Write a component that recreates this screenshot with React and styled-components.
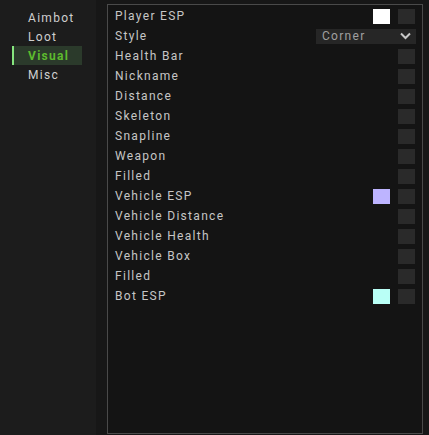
import React from 'react';
import styled, { createGlobalStyle } from 'styled-components';

const GlobalStyle = createGlobalStyle`
  html, body {
    margin: 0;
    padding: 0;
    background: #171717;
  }
  body {
    font-family: Roboto, "Noto Sans", sans-serif;
  }
`;

const Layout = styled.div`
  display: flex;
  width: 429px;
  height: 435px;
  background: #171717;
`;

const Sidebar = styled.nav`
  width: 96px;
  flex-shrink: 0;
  background: #1c1c1c;
  padding-top: 8px;
  display: flex;
  flex-direction: column;
`;

const NavItem = styled.div`
  height: 19px;
  margin-left: 12px;
  width: 70px;
  box-sizing: border-box;
  padding-left: 14px;
  display: flex;
  align-items: center;
  font-size: 12px;
  letter-spacing: 1.3px;
  font-weight: ${(p) => (p.$active ? 700 : 400)};
  color: ${(p) => (p.$active ? '#5dbb2e' : '#cfcfcf')};
  background: ${(p) => (p.$active ? '#2b3a2b' : 'transparent')};
  border-left: 2px solid ${(p) => (p.$active ? '#86e67e' : 'transparent')};
`;

const Main = styled.main`
  flex: 1;
  padding: 4px 6px 1px 11px;
  display: flex;
`;

const Panel = styled.section`
  flex: 1;
  border: 1px solid #4a4a4a;
  background: #141414;
  padding: 1px 7px 0 7px;
  display: flex;
  flex-direction: column;
`;

const Row = styled.div`
  height: 20px;
  display: flex;
  align-items: center;
  gap: 8px;
`;

const Label = styled.span`
  flex: 1;
  font-size: 12px;
  font-weight: 400;
  letter-spacing: 1.3px;
  color: #c6c6c6;
`;

const Swatch = styled.div`
  width: 17px;
  height: 15px;
  background: ${(p) => p.$color};
`;

const Check = styled.div`
  width: 17px;
  height: 15px;
  background: #2a2a2a;
`;

const Select = styled.div`
  width: 100px;
  height: 15px;
  margin-right: -1px;
  box-sizing: border-box;
  background: #262626;
  display: flex;
  align-items: center;
  justify-content: space-between;
  padding: 0 5px 0 6px;
  font-size: 12px;
  font-weight: 400;
  letter-spacing: 1.3px;
  color: #a0a0a0;
`;

const Chevron = () => (
  <svg width="11" height="8" viewBox="0 0 11 8">
    <path d="M1 1.5 L5.5 6 L10 1.5" fill="none" stroke="#c8c8c8" strokeWidth="2" />
  </svg>
);

const nav = ['Aimbot', 'Loot', 'Visual', 'Misc'];

const options = [
  { label: 'Player ESP', color: '#ffffff' },
  { label: 'Style', select: 'Corner' },
  { label: 'Health Bar' },
  { label: 'Nickname' },
  { label: 'Distance' },
  { label: 'Skeleton' },
  { label: 'Snapline' },
  { label: 'Weapon' },
  { label: 'Filled' },
  { label: 'Vehicle ESP', color: '#bdb4ff' },
  { label: 'Vehicle Distance' },
  { label: 'Vehicle Health' },
  { label: 'Vehicle Box' },
  { label: 'Filled' },
  { label: 'Bot ESP', color: '#b9fff6' },
];

const App = () => (
  <>
    <GlobalStyle />
    <Layout>
      <Sidebar>
        {nav.map((n) => (
          <NavItem key={n} $active={n === 'Visual'}>{n}</NavItem>
        ))}
      </Sidebar>
      <Main>
        <Panel>
          {options.map((o, i) => (
            <Row key={i}>
              <Label>{o.label}</Label>
              {o.select ? (
                <Select>
                  {o.select}
                  <Chevron />
                </Select>
              ) : (
                <>
                  {o.color && <Swatch $color={o.color} />}
                  <Check />
                </>
              )}
            </Row>
          ))}
        </Panel>
      </Main>
    </Layout>
  </>
);

export default App;
